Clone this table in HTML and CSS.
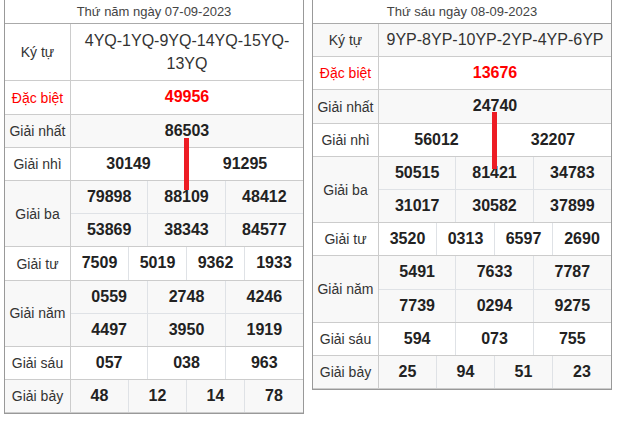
FILE: index.html
```html
<!DOCTYPE html>
<html lang="vi">
<head>
<meta charset="utf-8">
<title>Kết quả xổ số</title>
<link rel="stylesheet" href="styles.css">
</head>
<body>
<div class="board">
  <div class="sheet">
    <div class="caption">Thứ năm ngày 07-09-2023</div>
    <div class="row">
      <div class="label">Ký tự</div>
      <div class="vals c1"><div class="code wrap">4YQ-1YQ-9YQ-14YQ-15YQ-13YQ</div></div>
    </div>
    <div class="row">
      <div class="label special">Đặc biệt</div>
      <div class="vals c1"><div class="num special">49956</div></div>
    </div>
    <div class="row alt">
      <div class="label">Giải nhất</div>
      <div class="vals c1"><div class="num">86503</div></div>
    </div>
    <div class="row">
      <div class="label">Giải nhì</div>
      <div class="vals c2"><div class="num">30149</div><div class="num">91295</div></div>
    </div>
    <div class="row alt">
      <div class="label">Giải ba</div>
      <div class="vals c3">
        <div class="num">79898</div><div class="num">88109</div><div class="num">48412</div>
        <div class="num">53869</div><div class="num">38343</div><div class="num">84577</div>
      </div>
    </div>
    <div class="row">
      <div class="label">Giải tư</div>
      <div class="vals c4"><div class="num">7509</div><div class="num">5019</div><div class="num">9362</div><div class="num">1933</div></div>
    </div>
    <div class="row alt">
      <div class="label">Giải năm</div>
      <div class="vals c3">
        <div class="num">0559</div><div class="num">2748</div><div class="num">4246</div>
        <div class="num">4497</div><div class="num">3950</div><div class="num">1919</div>
      </div>
    </div>
    <div class="row">
      <div class="label">Giải sáu</div>
      <div class="vals c3"><div class="num">057</div><div class="num">038</div><div class="num">963</div></div>
    </div>
    <div class="row alt">
      <div class="label">Giải bảy</div>
      <div class="vals c4"><div class="num">48</div><div class="num">12</div><div class="num">14</div><div class="num">78</div></div>
    </div>
    <div class="marker marker-a"></div>
  </div>

  <div class="sheet">
    <div class="caption">Thứ sáu ngày 08-09-2023</div>
    <div class="row alt">
      <div class="label">Ký tự</div>
      <div class="vals c1"><div class="code">9YP-8YP-10YP-2YP-4YP-6YP</div></div>
    </div>
    <div class="row">
      <div class="label special">Đặc biệt</div>
      <div class="vals c1"><div class="num special">13676</div></div>
    </div>
    <div class="row alt">
      <div class="label">Giải nhất</div>
      <div class="vals c1"><div class="num">24740</div></div>
    </div>
    <div class="row">
      <div class="label">Giải nhì</div>
      <div class="vals c2"><div class="num">56012</div><div class="num">32207</div></div>
    </div>
    <div class="row alt">
      <div class="label">Giải ba</div>
      <div class="vals c3">
        <div class="num">50515</div><div class="num">81421</div><div class="num">34783</div>
        <div class="num">31017</div><div class="num">30582</div><div class="num">37899</div>
      </div>
    </div>
    <div class="row">
      <div class="label">Giải tư</div>
      <div class="vals c4"><div class="num">3520</div><div class="num">0313</div><div class="num">6597</div><div class="num">2690</div></div>
    </div>
    <div class="row alt">
      <div class="label">Giải năm</div>
      <div class="vals c3">
        <div class="num">5491</div><div class="num">7633</div><div class="num">7787</div>
        <div class="num">7739</div><div class="num">0294</div><div class="num">9275</div>
      </div>
    </div>
    <div class="row">
      <div class="label">Giải sáu</div>
      <div class="vals c3"><div class="num">594</div><div class="num">073</div><div class="num">755</div></div>
    </div>
    <div class="row alt">
      <div class="label">Giải bảy</div>
      <div class="vals c4"><div class="num">25</div><div class="num">94</div><div class="num">51</div><div class="num">23</div></div>
    </div>
    <div class="marker marker-b"></div>
  </div>
</div>
</body>
</html>
```
FILE: styles.css
```css
html, body {
  margin: 0;
  padding: 0;
  background: #fff;
}
body {
  font-family: "Liberation Sans", Arial, sans-serif;
  color: #333;
}
.board {
  display: flex;
  align-items: flex-start;
  gap: 8px;
  padding-left: 4px;
}
.sheet {
  position: relative;
  width: 300px;
  box-sizing: border-box;
  border: 1px solid #999;
  border-top: none;
  background: #fff;
}
.caption {
  height: 23px;
  line-height: 23px;
  text-align: center;
  font-size: 13px;
  color: #444;
  border-bottom: 1px solid #aaa;
}
.row {
  display: grid;
  grid-template-columns: 66px 1fr;
  border-bottom: 1px solid #ccc;
}
.row:last-of-type {
  border-bottom: none;
}
.row.alt {
  background: #f8f8f8;
}
.label {
  box-sizing: border-box;
  border-right: 1px solid #ccc;
  display: flex;
  align-items: center;
  justify-content: center;
  text-align: center;
  font-size: 14px;
  color: #333;
}
.label.special {
  color: #f00;
}
.vals {
  display: grid;
}
.c1 { grid-template-columns: 1fr; }
.c2 { grid-template-columns: repeat(2, 1fr); }
.c3 { grid-template-columns: repeat(3, 1fr); }
.c4 { grid-template-columns: repeat(4, 1fr); }
.num, .code {
  padding: 5px 2px;
  line-height: 22.2px;
  text-align: center;
  font-size: 16px;
  min-width: 0;
}
.code.wrap {
  line-height: 23.2px;
}
.num {
  font-weight: bold;
  color: #222;
  border-right: 1px solid #dfe2e6;
}
.code {
  color: #333;
}
.num.special {
  color: #f00;
}
.vals > .num:last-child,
.c2 > .num:nth-child(2n),
.c3 > .num:nth-child(3n),
.c4 > .num:nth-child(4n) {
  border-right: none;
}
.c3 > .num:nth-child(-n+3) {
  border-bottom: 1px solid #dfe2e6;
}
.c3 > .num:nth-child(-n+3):nth-last-child(-n+3) {
  border-bottom: none;
}
.c1 > .num { border-right: none; }
.marker {
  position: absolute;
  left: 179px;
  width: 5px;
  background: #ed1c24;
}
.marker-a {
  top: 138px;
  height: 52px;
}
.marker-b {
  top: 112px;
  height: 57px;
}
```
